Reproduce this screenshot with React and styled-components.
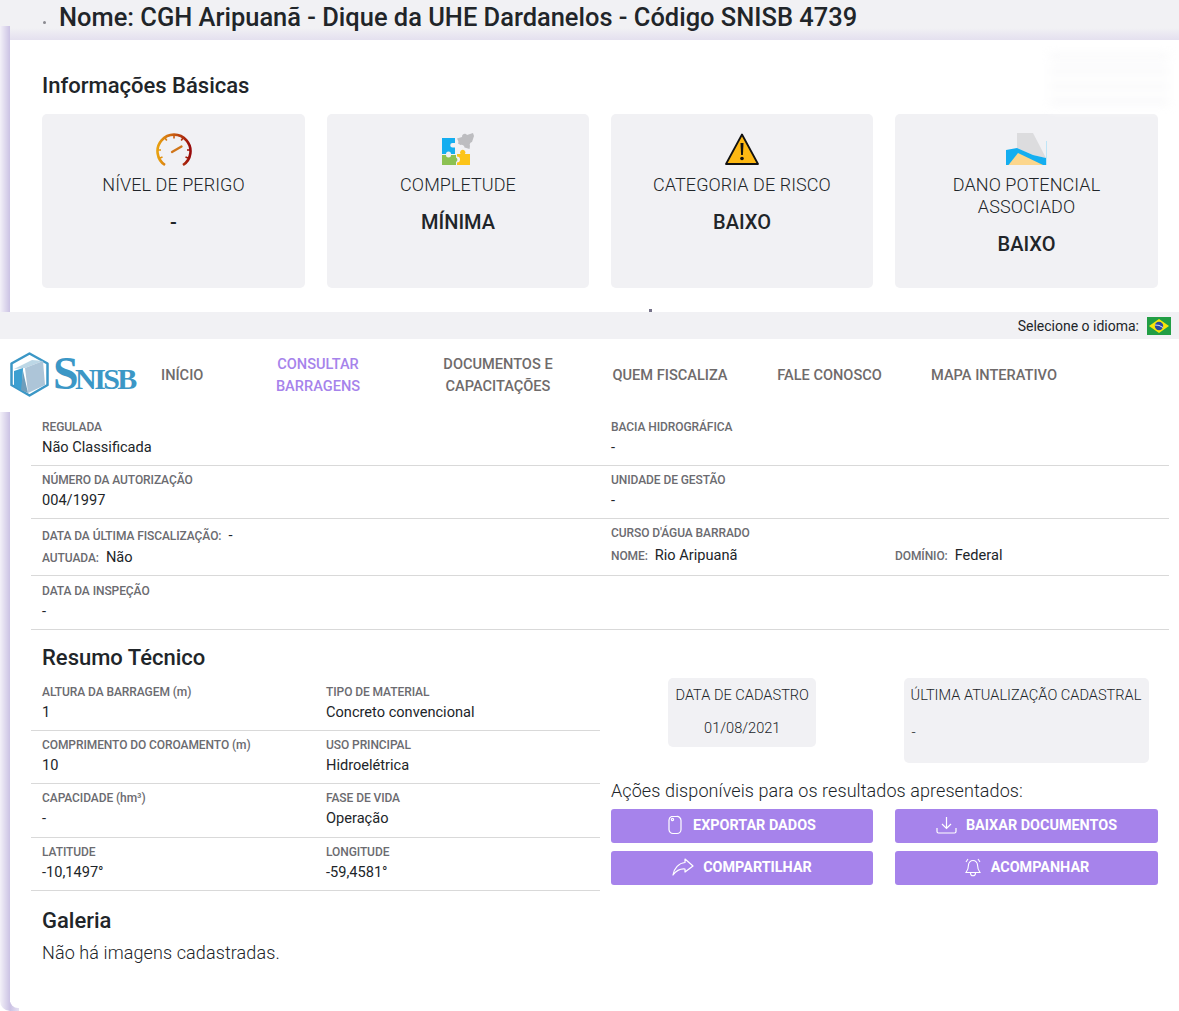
import styled, { createGlobalStyle } from "styled-components";

const GlobalStyle = createGlobalStyle`
  html, body { margin: 0; padding: 0; background: #fff; }
  body { font-family: Roboto, "Liberation Sans", sans-serif; color: #212529; }
  * { box-sizing: border-box; }
`;

const Page = styled.div`
  width: 1179px;
  height: 1011px;
  overflow: hidden;
  position: relative;
`;

const TitleBar = styled.div`
  height: 40px;
  background: linear-gradient(to bottom, #f1f1f4 70%, #e4e0ef 100%);
  display: flex;
  align-items: center;
  padding: 0 0 7px 43px;
  position: relative;
  z-index: 1;
  &::before {
    content: "";
    position: absolute;
    left: 0;
    top: 26px;
    width: 10px;
    height: 14px;
    background: linear-gradient(to right, #f3f1f8, #cbc2e4);
  }
`;

const Dot = styled.span`
  width: 3px;
  height: 3px;
  margin-top: 12px;
  margin-right: 13px;
  border-radius: 50%;
  background: #8a8a90;
`;

const PageTitle = styled.h1`
  margin: 0;
  font-size: 25.45px;
  line-height: 32px;
  font-weight: 500;
  color: #212529;
  white-space: nowrap;
`;

const Strip = styled.div`
  background: linear-gradient(to right, #f3f1f8 0, #cbc2e4 10px, #fff 10px);
  height: ${(props) => props.height}px;
  position: relative;
  overflow: hidden;
  border-bottom-left-radius: ${(props) => (props.$rounded ? "10px" : "0")};
`;

const Sheet = styled.div`
  margin-left: 10px;
  height: ${(props) => (props.$rounded ? "calc(100% - 3px)" : "100%")};
  background: #fff;
  border-bottom-left-radius: ${(props) => (props.$rounded ? "8px" : "0")};
  position: relative;
`;

const CornerShade = styled.div`
  position: absolute;
  left: 10px;
  bottom: 0;
  width: 9px;
  height: 9px;
  background: linear-gradient(to right, #cbc2e4, #e6e1f2);
`;

const TickMark = styled.span`
  position: absolute;
  left: 639px;
  bottom: 0;
  width: 3px;
  height: 3px;
  background: #77738a;
`;

const BasicSection = styled.section`
  padding: 31px 21px 0 32px;
`;

const Heading = styled.h2`
  margin: 0;
  font-size: 22px;
  line-height: 30px;
  font-weight: 500;
  color: #212529;
`;

const CardGrid = styled.div`
  display: grid;
  grid-template-columns: 263px 262px 262px 263px;
  column-gap: 22px;
  margin-top: 13px;
`;

const InfoCard = styled.div`
  height: 174px;
  background: #f1f1f4;
  border-radius: 5px;
  padding-top: 19px;
  display: flex;
  flex-direction: column;
  align-items: center;
  text-align: center;
`;

const IconSlot = styled.div`
  height: 33px;
  display: flex;
  align-items: flex-start;
  justify-content: center;
`;

const CardLabel = styled.div`
  margin-top: 8px;
  font-size: 18px;
  line-height: 22px;
  font-weight: 300;
  letter-spacing: 0.07px;
  color: #212529;
  max-width: 200px;
`;

const CardValue = styled.div`
  margin-top: 14px;
  font-size: 20px;
  line-height: 24px;
  font-weight: 500;
  color: #212529;
`;

const Smudge = styled.div`
  position: absolute;
  top: 14px;
  right: 10px;
  width: 120px;
  height: 56px;
  filter: blur(5px);
  background: repeating-linear-gradient(to bottom, #f6f6f8 0 5px, #fff 5px 15px);
`;

const LangBar = styled.div`
  height: 27px;
  background: #f1f1f4;
  display: flex;
  align-items: center;
  justify-content: flex-end;
  gap: 8px;
  padding-right: 8px;
  font-size: 14px;
  font-weight: 400;
  color: #212529;
`;

const NavBar = styled.nav`
  height: 73px;
  background: #fff;
  display: flex;
  align-items: center;
  padding: 0 0 2px 10px;
`;

const Logo = styled.div`
  display: flex;
  align-items: center;
  width: 151px;
  height: 46px;
  color: #3b97c6;
  font-family: "Liberation Serif", serif;
  font-weight: 700;
  font-size: 30px;
  line-height: 46px;
  letter-spacing: -2.6px;
`;

const LogoText = styled.span`
  margin-left: 3px;
  padding-top: 3px;
`;

const LogoBig = styled.span`
  font-size: 46px;
  letter-spacing: -3.500px;
`;

const NavItem = styled.a`
  font-size: 14.6px;
  line-height: 22px;
  font-weight: 500;
  text-align: center;
  color: ${(props) => (props.$active ? "#a683eb" : "#6f6b6b")};
  width: ${(props) => props.$width}px;
  flex: none;
`;

const DetailSection = styled.section`
  padding: 0 0 0 21px;
`;

const FieldRow = styled.div`
  display: grid;
  grid-template-columns: 569px 558px;
  height: ${(props) => props.$height}px;
  width: 1138px;
  border-bottom: 1px solid #d9d9d9;
  padding: ${(props) => props.$top || 6}px 11px 0;
`;

const Field = styled.div`
  display: flex;
  flex-direction: column;
`;

const Label = styled.span`
  font-size: 12px;
  line-height: 16px;
  font-weight: 500;
  letter-spacing: -0.08px;
  color: #6b6b70;
  white-space: nowrap;
`;

const Value = styled.span`
  font-size: 14.6px;
  line-height: 20px;
  margin-top: 2px;
  font-weight: 400;
  color: #212529;
`;

const InlineField = styled.div`
  display: flex;
  align-items: baseline;
  gap: 7px;
  height: 22px;
  ${(props) => props.$wide && "width: 284px;"}
`;

const InlineValue = styled.span`
  font-size: 14.6px;
  line-height: 20px;
  color: #212529;
`;

const InlineRow = styled.div`
  display: flex;
  margin-top: 4px;
`;

const Columns = styled.div`
  display: grid;
  grid-template-columns: 569px 547px;
  column-gap: 11px;
`;

const ResumoHeading = styled(Heading)`
  padding: 13px 0 0 11px;
`;

const TechTable = styled.div`
  margin-top: 5px;
`;

const TechRow = styled.div`
  display: grid;
  grid-template-columns: 284px 1fr;
  height: ${(props) => props.$height || 53}px;
  border-bottom: 1px solid #d9d9d9;
  padding: 6px 11px 0;
`;

const SideColumn = styled.div`
  padding-top: 48px;
`;

const DateGrid = styled.div`
  display: grid;
  grid-template-columns: 262.5px 263px;
  column-gap: 21px;
  align-items: start;
`;

const DateCard = styled.div`
  justify-self: center;
  width: ${(props) => props.$width}px;
  height: ${(props) => props.$height}px;
  background: #f1f1f4;
  border-radius: 5px;
  padding-top: 6px;
  font-size: 14.6px;
  line-height: 22px;
  font-weight: 300;
  text-align: ${(props) => (props.$left ? "left" : "center")};
`;

const DateTitle = styled.div`
  text-align: center;
  white-space: nowrap;
`;

const DateValue = styled.div`
  margin-top: ${(props) => (props.$left ? "15px" : "11px")};
  padding-left: ${(props) => (props.$left ? "8px" : "0")};
`;

const ActionsTitle = styled.div`
  margin-top: 16px;
  font-size: 18px;
  line-height: 24px;
  font-weight: 300;
  letter-spacing: 0.08px;
`;

const ButtonGrid = styled.div`
  display: grid;
  grid-template-columns: 262px 263px;
  column-gap: 22px;
  row-gap: 8px;
  margin-top: 6px;
`;

const ActionButton = styled.button`
  height: 34px;
  border: 0;
  border-radius: 3px;
  background: #a683eb;
  color: #fff;
  font-family: inherit;
  font-size: 14.4px;
  font-weight: 700;
  display: flex;
  align-items: center;
  justify-content: center;
  gap: 9px;
  padding: 0 0 2px;
`;

const GallerySection = styled.section`
  padding: 15px 0 0 32px;
`;

const EmptyText = styled.p`
  margin: 5px 0 0;
  font-size: 18px;
  line-height: 24px;
  font-weight: 300;
  letter-spacing: 0.1px;
  color: #212529;
`;

const GaugeIcon = () => (
  <svg width="36" height="34" viewBox="0 0 36 34" fill="none">
    <defs>
      <linearGradient id="gaugeArc" x1="0" x2="1" y1="0" y2="0">
        <stop offset="0" stopColor="#e8a110" />
        <stop offset="0.5" stopColor="#c85a10" />
        <stop offset="1" stopColor="#980a0a" />
      </linearGradient>
    </defs>
    <path d="M9 32 A16.500 16.500 0 1 1 27 32" stroke="url(#gaugeArc)" strokeWidth="2.600" />
    <path d="M18 2v3.500M9 5l1.800 2.500M27 5l-1.800 2.500M2 17h3M34 17h-3M4 25l2.500-1M32 25l-2.500-1" stroke="url(#gaugeArc)" strokeWidth="1.600" />
    <path d="M16 19 L25.500 13.500" stroke="#d0761a" strokeWidth="2.300" strokeLinecap="round" />
  </svg>
);

const PuzzleIcon = () => (
  <svg width="32" height="32" viewBox="0 0 32 32">
    <path d="M0 5h13v5h-2.500a2.200 2.200 0 0 0 0 4.500H13V21H9a2.500 2.500 0 0 0-5 0H0z" fill="#14aef0" />
    <path d="M0 22h4a2.500 2.500 0 0 0 5 0h5v2.500a2.500 2.500 0 0 1 0 4.500v3H0z" fill="#8cc152" />
    <path d="M15 32v-2.500a3 3 0 0 0 0-6V21h3.500a2.700 2.700 0 1 1 4.500 0H28v11z" fill="#fcc419" />
    <path d="M15 5.500l5-1.500a2.800 2.800 0 0 1 5-2L31 0l1 3-2 6a2.800 2.800 0 0 0-2 4l-.5 3-5-1.500a2.800 2.800 0 0 0-4-2.500L16 10.500a2.800 2.800 0 0 0 0-3z" fill="#bdbdc0" />
  </svg>
);

const WarningIcon = () => (
  <svg width="34" height="32" viewBox="0 0 34 32">
    <path d="M17 1.500 L33 31 H1 Z" fill="#fdb813" stroke="#111" strokeWidth="1.800" strokeLinejoin="round" />
    <path d="M15.500 10h3l-.6 12h-1.800z" fill="#111" />
    <circle cx="17" cy="25.500" r="1.800" fill="#111" />
  </svg>
);

const DamIcon = () => (
  <svg width="41" height="32" viewBox="0 0 41 32">
    <path d="M11 0 H27 L40 25 L27 22 L11 15 Z" fill="#dcdcde" />
    <path d="M0 17 L11 15 L27 22 L40 25 V32 H0 Z" fill="#14aef0" />
    <path d="M2.500 32 L12 20 L37 32 Z" fill="#fcd68c" />
    <path d="M40.500 8 V32" stroke="#bfe5f7" strokeWidth="1" />
  </svg>
);

const BrazilFlag = () => (
  <svg width="24" height="18" viewBox="0 0 24 18">
    <rect width="24" height="18" fill="#229e45" />
    <path d="M12 2 L22 9 L12 16 L2 9 Z" fill="#f8e509" />
    <circle cx="12" cy="9" r="4.200" fill="#2b49a3" />
    <path d="M8 8 Q12 7.500 16 10.500" stroke="#fff" strokeWidth="0.800" fill="none" />
  </svg>
);

const LogoMark = () => (
  <svg width="40" height="46" viewBox="0 0 40 46">
    <path d="M19.500 1.500 L37.500 11.500 V33 L19.500 43.500 L1.500 33 V11.500 Z" fill="#fff" stroke="#3b97c6" strokeWidth="2.500" strokeLinejoin="round" />
    <path d="M4 17 L22 8 L33 9 L15 16 Z" fill="#bcd7e6" />
    <path d="M4 19 L13 16 L12 39 L4 34 Z" fill="#3b9fd1" />
    <path d="M15 16 L33 9 L35 33 L18 41 Z" fill="#adc5d8" />
    <path d="M13 19 L18 41 L11 38 Z" fill="#6d9dbb" />
  </svg>
);

const IconExport = () => (
  <svg width="16" height="20" viewBox="0 0 16 20" fill="none" stroke="#fff" strokeWidth="1.200">
    <path d="M3.500 1.500h5a4 4 0 0 1 4.500 4v9a4 4 0 0 1-4 4H5a4 4 0 0 1-4-4V5a4 4 0 0 1 2.500-3.500z" />
    <circle cx="4.500" cy="4.500" r="1.100" />
  </svg>
);

const IconDownload = () => (
  <svg width="21" height="18" viewBox="0 0 21 18" fill="none" stroke="#fff" strokeWidth="1.200">
    <path d="M10.500 1v11M6 8l4.500 4.500L15 8" />
    <path d="M1 12v3.500A1.500 1.500 0 0 0 2.500 17h16a1.500 1.500 0 0 0 1.500-1.500V12" />
  </svg>
);

const IconShare = () => (
  <svg width="22" height="18" viewBox="0 0 22 18" fill="none" stroke="#fff" strokeWidth="1.200" strokeLinejoin="round">
    <path d="M13 1 L21 8 L13 14 V11 C8 10.500 4 13 1 17 C2 10 7 5 13 4.500 Z" />
  </svg>
);

const IconBell = () => (
  <svg width="18" height="19" viewBox="0 0 18 19" fill="none" stroke="#fff" strokeWidth="1.100">
    <path d="M9 2.500A4.500 4.500 0 0 0 4.500 7c0 4-1 5.500-2.500 7.500h14c-1.500-2-2.500-3.500-2.500-7.500A4.500 4.500 0 0 0 9 2.500z" />
    <path d="M6.500 15c0 1.500 1 2.800 2.500 2.800s2.500-1.300 2.500-2.800" />
    <path d="M4 1 2 4M14 1l2 3" />
  </svg>
);

const cards = [
  { icon: <GaugeIcon />, label: "NÍVEL DE PERIGO", value: "-" },
  { icon: <PuzzleIcon />, label: "COMPLETUDE", value: "MÍNIMA" },
  { icon: <WarningIcon />, label: "CATEGORIA DE RISCO", value: "BAIXO" },
  { icon: <DamIcon />, label: "DANO POTENCIAL ASSOCIADO", value: "BAIXO" },
];

const techRows = [
  ["ALTURA DA BARRAGEM (m)", "1", "TIPO DE MATERIAL", "Concreto convencional", 53],
  ["COMPRIMENTO DO COROAMENTO (m)", "10", "USO PRINCIPAL", "Hidroelétrica", 53],
  ["CAPACIDADE (hm³)", "-", "FASE DE VIDA", "Operação", 54],
  ["LATITUDE", "-10,1497°", "LONGITUDE", "-59,4581°", 53],
];

const Pair = ({ label, value }) => (
  <Field>
    <Label>{label}</Label>
    <Value>{value}</Value>
  </Field>
);

const App = () => {
  return (
    <Page>
      <GlobalStyle />
      <TitleBar>
        <Dot />
        <PageTitle>Nome: CGH Aripuanã - Dique da UHE Dardanelos - Código SNISB 4739</PageTitle>
      </TitleBar>

      <Strip height={272}>
        <Sheet>
          <Smudge />
          <TickMark />
          <BasicSection>
            <Heading>Informações Básicas</Heading>
            <CardGrid>
              {cards.map((card) => (
                <InfoCard key={card.label}>
                  <IconSlot>{card.icon}</IconSlot>
                  <CardLabel>{card.label}</CardLabel>
                  <CardValue>{card.value}</CardValue>
                </InfoCard>
              ))}
            </CardGrid>
          </BasicSection>
        </Sheet>
      </Strip>

      <LangBar>
        <span>Selecione o idioma:</span>
        <BrazilFlag />
      </LangBar>

      <NavBar>
        <Logo>
          <LogoMark />
          <LogoText>
            <LogoBig>S</LogoBig>NISB
          </LogoText>
        </Logo>
        <NavItem $width={42}>INÍCIO</NavItem>
        <NavItem $width={230} $active>
          CONSULTAR
          <br />
          BARRAGENS
        </NavItem>
        <NavItem $width={130}>
          DOCUMENTOS E
          <br />
          CAPACITAÇÕES
        </NavItem>
        <NavItem $width={214}>QUEM FISCALIZA</NavItem>
        <NavItem $width={105}>FALE CONOSCO</NavItem>
        <NavItem $width={224}>MAPA INTERATIVO</NavItem>
      </NavBar>

      <Strip height={599} $rounded>
        <CornerShade />
        <Sheet $rounded>
          <DetailSection>
            <FieldRow $height={54} $top={7}>
              <Pair label="REGULADA" value="Não Classificada" />
              <Pair label="BACIA HIDROGRÁFICA" value="-" />
            </FieldRow>
            <FieldRow $height={53}>
              <Pair label="NÚMERO DA AUTORIZAÇÃO" value="004/1997" />
              <Pair label="UNIDADE DE GESTÃO" value="-" />
            </FieldRow>
            <FieldRow $height={57}>
              <Field>
                <InlineField>
                  <Label>DATA DA ÚLTIMA FISCALIZAÇÃO:</Label>
                  <InlineValue>-</InlineValue>
                </InlineField>
                <InlineField>
                  <Label>AUTUADA:</Label>
                  <InlineValue>Não</InlineValue>
                </InlineField>
              </Field>
              <Field>
                <Label>CURSO D'ÁGUA BARRADO</Label>
                <InlineRow>
                  <InlineField $wide>
                    <Label>NOME:</Label>
                    <InlineValue>Rio Aripuanã</InlineValue>
                  </InlineField>
                  <InlineField>
                    <Label>DOMÍNIO:</Label>
                    <InlineValue>Federal</InlineValue>
                  </InlineField>
                </InlineRow>
              </Field>
            </FieldRow>
            <FieldRow $height={54} $top={7}>
              <Pair label="DATA DA INSPEÇÃO" value="-" />
            </FieldRow>

            <Columns>
              <div>
                <ResumoHeading>Resumo Técnico</ResumoHeading>
                <TechTable>
                  {techRows.map((row) => (
                    <TechRow key={row[0]} $height={row[4]}>
                      <Pair label={row[0]} value={row[1]} />
                      <Pair label={row[2]} value={row[3]} />
                    </TechRow>
                  ))}
                </TechTable>
              </div>
              <SideColumn>
                <DateGrid>
                  <DateCard $width={148} $height={69}>
                    <DateTitle>DATA DE CADASTRO</DateTitle>
                    <DateValue>01/08/2021</DateValue>
                  </DateCard>
                  <DateCard $width={245} $height={85} $left>
                    <DateTitle>ÚLTIMA ATUALIZAÇÃO CADASTRAL</DateTitle>
                    <DateValue $left>-</DateValue>
                  </DateCard>
                </DateGrid>
                <ActionsTitle>Ações disponíveis para os resultados apresentados:</ActionsTitle>
                <ButtonGrid>
                  <ActionButton>
                    <IconExport />
                    EXPORTAR DADOS
                  </ActionButton>
                  <ActionButton>
                    <IconDownload />
                    BAIXAR DOCUMENTOS
                  </ActionButton>
                  <ActionButton>
                    <IconShare />
                    COMPARTILHAR
                  </ActionButton>
                  <ActionButton>
                    <IconBell />
                    ACOMPANHAR
                  </ActionButton>
                </ButtonGrid>
              </SideColumn>
            </Columns>
          </DetailSection>

          <GallerySection>
            <Heading>Galeria</Heading>
            <EmptyText>Não há imagens cadastradas.</EmptyText>
          </GallerySection>
        </Sheet>
      </Strip>
    </Page>
  );
};

export default App;
